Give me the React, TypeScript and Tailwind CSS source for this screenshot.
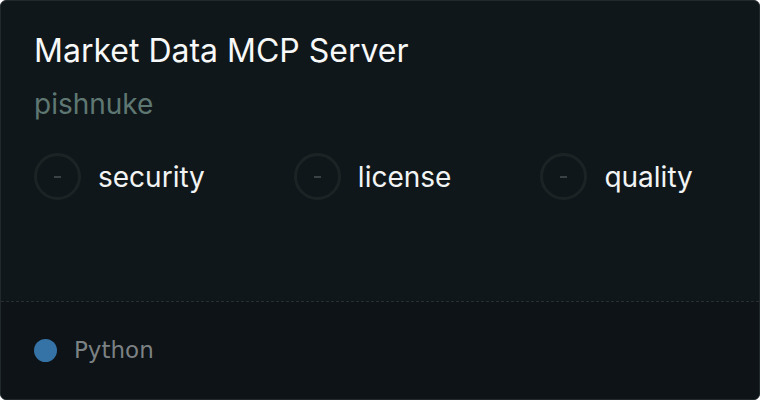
import React from "react";

function Badge({ label }: { label: string }) {
  return (
    <div className="flex items-center gap-[17px]">
      <div className="flex h-[47px] w-[47px] items-center justify-center rounded-full border-[3px] border-[#1c2325]">
        <span className="h-[2px] w-[7px] bg-[#3b4245]" />
      </div>
      <span className="text-[28px] leading-none text-[#f2f4f4]">{label}</span>
    </div>
  );
}

export default function App() {
  return (
    <div className="h-[400px] w-[760px] bg-white" style={{ fontFamily: "Inter, 'Noto Sans', sans-serif" }}>
      <div className="flex h-full w-full flex-col overflow-hidden rounded-[6px] border border-[#22292c] bg-[#10171a]">
        <div className="flex flex-1 flex-col px-[33px] pt-[30px]">
          <div className="text-[32px] leading-[40px] text-[#f7f8f8]">Market Data MCP Server</div>
          <div className="mt-[16px] text-[28px] leading-[34px] text-[#5e7772]">pishnuke</div>
          <div className="mt-[32px] flex gap-[89px]">
            <Badge label="security" />
            <Badge label="license" />
            <Badge label="quality" />
          </div>
        </div>
        <div className="h-[98px] border-t border-dashed border-[#263033] bg-[#0d1316] px-[33px]">
          <div className="flex h-full items-center gap-[17px] pb-[1px]">
            <span className="h-[23px] w-[23px] rounded-full bg-[#3572a5]" />
            <span className="text-[23px] text-[#7c8183]" style={{ fontFamily: "'DejaVu Sans', sans-serif" }}>Python</span>
          </div>
        </div>
      </div>
    </div>
  );
}
